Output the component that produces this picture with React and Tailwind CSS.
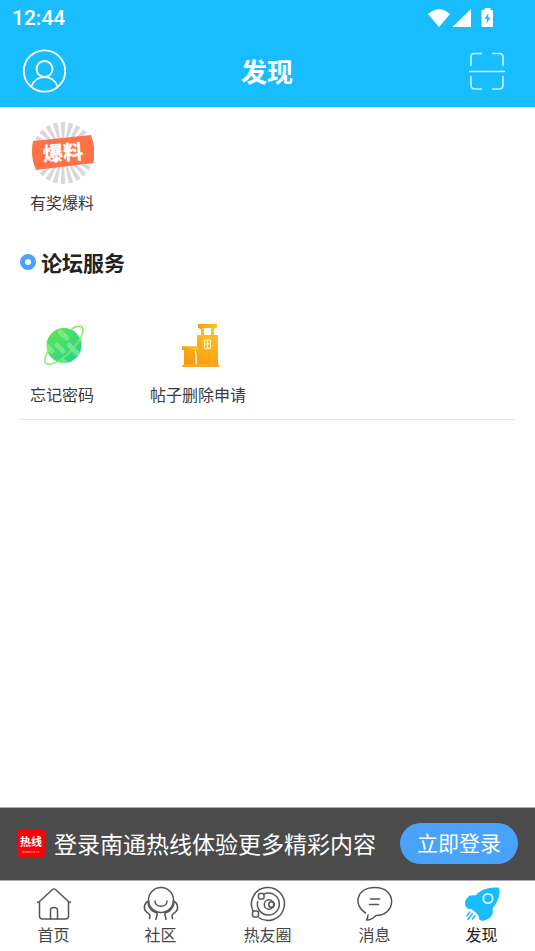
import { useState } from 'react';

const rays = Array.from({ length: 24 }, (_, i) => i * 15);

function BurstIcon() {
  return (
    <svg width="62" height="62" viewBox="1 1 62 62">
      <defs>
        <clipPath id="burst-clip">
          <circle cx="32" cy="32" r="31" />
        </clipPath>
      </defs>
      <g clipPath="url(#burst-clip)">
        {rays.map((deg) => (
          <path key={deg} d="M32 32 L29.6 0 L34.4 0 Z" fill="#d8d8d8" transform={`rotate(${deg} 32 32)`} />
        ))}
      </g>
      <path d="M2 20 L60 14 Q65 27 62.500 42 L5 49 Q-1 35 2 20 Z" fill="#ff7245" />
      <text
        x="32"
        y="39"
        transform="rotate(-4 32 32)"
        textAnchor="middle"
        className="fill-white text-[20px] font-black"
      >
        爆料
      </text>
    </svg>
  );
}

function PlanetIcon() {
  return (
    <svg width="44" height="44" viewBox="-1 0 44 44">
      <defs>
        <linearGradient id="planet" x1="0" y1="0" x2="1" y2="1">
          <stop offset="0" stopColor="#62e84a" />
          <stop offset="1" stopColor="#20cf9c" />
        </linearGradient>
        <clipPath id="planet-clip">
          <circle cx="22" cy="22.5" r="17.5" />
        </clipPath>
      </defs>
      <circle cx="22" cy="22.5" r="17.5" fill="url(#planet)" />
      <g clipPath="url(#planet-clip)" stroke="#a8f5a0" strokeOpacity=".5" strokeWidth="5" strokeLinecap="round">
        <path d="M18 9 L25 15" />
        <path d="M15 22 L21 28" />
        <path d="M5 23 L10 28" />
        <path d="M27 22 L36 31" />
        <path d="M21 38 L25 41" />
      </g>
      <path
        d="M29 6.5 C35 2.5 41 1.8 41 7 C41 15 29 30 19 36.5 C11 42 3 43 3 38 C3 35 4 31 6.5 28"
        fill="none"
        stroke="#7ff05c"
        strokeWidth="1.5"
        strokeLinecap="round"
      />
    </svg>
  );
}

function BuildingIcon() {
  return (
    <svg width="44" height="44" viewBox="-1 0 44 44">
      <defs>
        <linearGradient id="building" x1="0.7" y1="0" x2="0.3" y2="1">
          <stop offset="0" stopColor="#ffc62a" />
          <stop offset="1" stopColor="#f79a0c" />
        </linearGradient>
        <linearGradient id="roof" x1="0" y1="0" x2="1" y2="0">
          <stop offset="0" stopColor="#f99a10" />
          <stop offset="1" stopColor="#ffc22a" />
        </linearGradient>
      </defs>
      <path d="M20 1 H39 V5 H37 L36 7 V12 H40 V41 L42 44 H4 L6 41 V27 H4 V23.500 H19 V12 H23 V7 L21 5 H20 Z M26 5 V12 H33 V5 Z" fillRule="evenodd" fill="url(#building)" />
      <path d="M4 23.500 H19 V27 H4 Z" fill="url(#roof)" />
      <path d="M20 1 H39 V5 H20 Z" fill="url(#roof)" />
      <path d="M17 28 Q19 32 18 41" fill="none" stroke="#fff" strokeWidth="1.300" />
      <path d="M4 44 L6 41 H40 L42 44 Z" fill="#f8a928" />
      <rect x="26.500" y="17" width="6" height="8.500" rx="1" fill="none" stroke="#fff3cf" strokeWidth="1.200" />
      <path d="M29.500 17 V25.500 M26.500 21 H32.500" stroke="#fff3cf" strokeWidth="1.200" />
    </svg>
  );
}

function StatusIcons() {
  return (
    <svg width="68" height="22" viewBox="0 0 68 22" fill="#fff" aria-hidden="true">
      <path d="M0 6 Q11 -3.500 22 6 L11 19 Z" />
      <path d="M43 1 V19 H24.500 Z" />
      <path d="M56.500 0 H62.500 V2 H64 Q65 2 65 3 V18 Q65 19 64 19 H54.500 Q53.500 19 53.500 18 V3 Q53.500 2 54.500 2 H56.500 Z" />
      <path d="M60.500 5 L56.500 11 H59 L58.500 15.500 L62.500 9.500 H60 Z" fill="#18bdff" />
    </svg>
  );
}

function UserIcon() {
  return (
    <svg width="44" height="44" viewBox="0 0 44 44" fill="none" stroke="#fff" strokeWidth="1.800">
      <circle cx="22.500" cy="22" r="20.700" />
      <circle cx="22.500" cy="20" r="8" />
      <path d="M9.500 37.500 C13.500 25 31.500 25 35.500 37.500" />
    </svg>
  );
}

function ScanIcon() {
  return (
    <svg width="38" height="38" viewBox="0 0 38 38" fill="none" stroke="#fff" strokeOpacity=".8" strokeWidth="1.600">
      <path d="M3 14 V5 Q3 1.500 6 1.500 H14 M24 1.500 H31 Q35 1.500 35 5 V14 M3 24 V33 Q3 37 7 37 H14 M24 37 H31 Q35 37 35 33 V24 M1 19.500 H37" />
    </svg>
  );
}

function HomeIcon() {
  return (
    <svg width="36" height="36" viewBox="0 0 36 36" fill="none" stroke="#555" strokeWidth="1.500" strokeLinecap="round" strokeLinejoin="round">
      <path d="M1.500 16 Q2 17 3.500 15.500 L16.500 3.500 Q18 2.500 19.500 3.500 L32.500 15.500 Q34 17 34.500 16" />
      <path d="M3.500 16 V30 Q3.500 33 6.500 33 H29.500 Q32.500 33 32.500 30 V16" />
      <path d="M14.500 33 V24.500 Q14.500 21.500 18 21.500 Q21.500 21.500 21.500 24.500 V33" />
    </svg>
  );
}

function CommunityIcon() {
  return (
    <svg width="36" height="36" viewBox="0 0 36 36" fill="none" stroke="#555" strokeWidth="1.500" strokeLinecap="round" strokeLinejoin="round">
      <circle cx="18" cy="14" r="12.500" />
      <path d="M12 15 C12 22 24 22 24 15" />
      <path d="M5.500 15 C1 17 0 23 3.500 26 C6 28 8 28.500 6.500 32.500" />
      <path d="M5.500 15 C4.500 19 6 22 9.500 25 L14 27 C15 29 13 30 13 33.500" />
      <path d="M30.500 15 C35 17 36 23 32.500 26 C30 28 28 28.500 29.500 32.500" />
      <path d="M30.500 15 C31.500 19 30 22 26.500 25 L22 27 C21 29 23 30 23 33.500" />
    </svg>
  );
}

function CircleIcon() {
  return (
    <svg width="36" height="36" viewBox="0 0 36 36" fill="none" stroke="#555" strokeWidth="1.500">
      <path d="M3 25 A16.500 16.500 0 1 1 8.500 31.500" />
      <path d="M7.800 15 A11 11 0 1 0 13.500 8.200" />
      <circle cx="19" cy="18.500" r="4.700" />
      <circle cx="21.500" cy="18.500" r="2.800" />
      <rect x="8.500" y="7.500" width="5.500" height="5.500" rx="1.500" fill="#fff" />
      <rect x="2.500" y="25" width="6" height="6" rx="2" fill="#fff" />
    </svg>
  );
}

function MessageIcon() {
  return (
    <svg width="36" height="36" viewBox="0 0 36 36" fill="none" stroke="#555" strokeWidth="1.500" strokeLinecap="round" strokeLinejoin="round">
      <path d="M8.500 27 C-4 19.500 -1 1.500 18 1.500 C40 1.500 40 29 19 29.500 C15.500 33 12.500 34.500 9.500 34 Q11 31.500 11 29" />
      <path d="M13.500 13 H22.500 M12.500 18.500 H21.500" />
    </svg>
  );
}

function RocketIcon() {
  return (
    <svg width="36" height="36" viewBox="0 0 36 36" fill="#1abcff">
      <path d="M33.500 1.500 Q35.500 1.500 35.500 3.500 C36 10 34 16 28.500 22.500 C29.500 28 28 31 23 33.500 C19 35.500 15 35 15 32 C14.500 29 13 27.500 11 26 C9 24.500 8.500 23 5 23 C1 22 0 17 2 13.500 C4 10 7 8.500 11.500 9.500 C16 4 24 1 33.500 1.500 Z" />
      <circle cx="24" cy="12.500" r="4.700" stroke="#d8f2ff" strokeWidth="1.800" />
      <path d="M6 26 L3 30 M8.500 27.500 L4 33.500 M11 29.500 L8.500 33" fill="none" stroke="#1abcff" strokeWidth="1.500" strokeLinecap="round" />
    </svg>
  );
}

const tabs = [
  { label: '首页', icon: HomeIcon },
  { label: '社区', icon: CommunityIcon },
  { label: '热友圈', icon: CircleIcon },
  { label: '消息', icon: MessageIcon },
  { label: '发现', icon: RocketIcon },
];

function ServiceLink({ label, children }) {
  return (
    <a href="#" className="flex flex-col items-center text-base leading-6 text-[#3a3a3a]">
      <span className="flex h-16 items-center justify-center pl-0.5">{children}</span>
      <span className="mt-[5px]">{label}</span>
    </a>
  );
}

export default function App() {
  const [active, setActive] = useState('发现');

  return (
    <div className="flex min-h-screen flex-col bg-white font-['Noto_Sans_CJK_SC',sans-serif]">
      {/* Header */}
      <header className="bg-[#18bdff] text-white">
        <div className="flex h-9 items-center justify-between pl-3 pr-[39px] pt-0.5">
          <span className="font-[Roboto,sans-serif] text-[21px] font-medium">12:44</span>
          <StatusIcons />
        </div>
        <div className="flex h-[71px] items-center justify-between px-[22px] pb-0.5 pr-[29px]">
          <button type="button" aria-label="我的">
            <UserIcon />
          </button>
          <h1 className="text-[26px] font-bold">发现</h1>
          <button type="button" aria-label="扫一扫">
            <ScanIcon />
          </button>
        </div>
      </header>

      {/* Services */}
      <main className="flex-1 px-5 pt-3.5">
        <div className="flex pl-2.5">
          <ServiceLink label="有奖爆料">
            <BurstIcon />
          </ServiceLink>
        </div>

        <h2 className="mt-8 flex items-center gap-[5px] text-[21px] font-bold leading-8 text-[#222]">
          <span className="size-4 rounded-full border-5 border-[#4aa3fb]" />
          论坛服务
        </h2>

        <div className="mt-[35px] flex gap-14 border-b border-[#e5e5e5] pb-[13px] pl-2.5">
          <ServiceLink label="忘记密码">
            <PlanetIcon />
          </ServiceLink>
          <ServiceLink label="帖子删除申请">
            <BuildingIcon />
          </ServiceLink>
        </div>
      </main>

      {/* Login banner */}
      <div className="flex h-[73px] items-center border-t border-[#aaa] bg-[#4b4b4b] px-[17px] pb-0.5 text-white">
        <div className="flex size-7 shrink-0 flex-col items-center rounded bg-[#fb0007] pt-1">
          <span className="text-[11px] font-bold leading-4">热线</span>
          <span className="font-['Liberation_Sans',sans-serif] text-[4px] leading-[6px] text-white/70">www.rx.cc</span>
        </div>
        <p className="ml-[9px] flex-1 whitespace-nowrap text-[23px]">登录南通热线体验更多精彩内容</p>
        <button type="button" className="h-[41px] shrink-0 rounded-full bg-[#4aa3fb] px-[17px] text-[21px]">
          立即登录
        </button>
      </div>

      {/* Tabs */}
      <nav className="flex h-[71px] border-t border-[#aaa] bg-white">
        {tabs.map(({ label, icon: Icon }) => (
          <button
            key={label}
            type="button"
            onClick={() => setActive(label)}
            className={`flex flex-1 flex-col items-center pt-[5px] text-base leading-6 ${active === label ? 'text-[#222]' : 'text-[#444]'}`}
          >
            <Icon />
            {label}
          </button>
        ))}
      </nav>
    </div>
  );
}
